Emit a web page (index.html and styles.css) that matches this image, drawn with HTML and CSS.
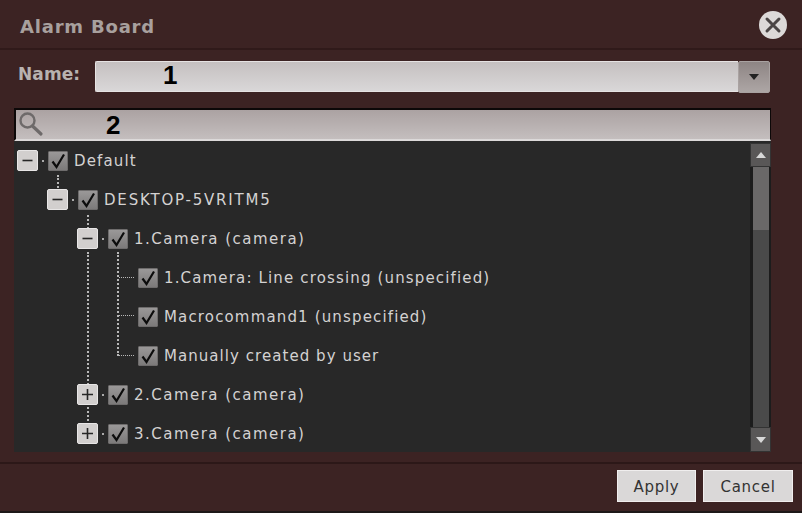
FILE: index.html
```html
<!DOCTYPE html>
<html lang="en">
<head>
<meta charset="utf-8">
<title>Alarm Board</title>
<link rel="stylesheet" href="styles.css">
</head>
<body>
<div class="dialog">
  <header class="titlebar">
    <h1 class="title">Alarm Board</h1>
    <button class="close" aria-label="Close">
      <svg width="30" height="30" viewBox="0 0 30 30"><circle cx="15" cy="15" r="14" fill="#dcd9d8"/><path d="M9 9 21 21M21 9 9 21" stroke="#4a4545" stroke-width="3" stroke-linecap="round"/></svg>
    </button>
  </header>
  <div class="name-row">
    <label class="name-label">Name:</label>
    <div class="combo">
      <div class="combo-input"><span class="mark mark-1">1</span></div>
      <div class="combo-btn"><svg width="10" height="6" viewBox="0 0 10 6"><path d="M0 0H10L5 6Z" fill="#222"/></svg></div>
    </div>
  </div>
  <div class="search">
    <svg class="search-icon" width="28" height="28" viewBox="0 0 28 28"><circle cx="11.5" cy="10.5" r="7" fill="none" stroke="#6e6a6a" stroke-width="2.4"/><path d="M16.5 16 25 24" stroke="#6e6a6a" stroke-width="3.2" stroke-linecap="round"/></svg>
    <span class="mark mark-2">2</span>
  </div>
  <div class="tree">
    <div class="rows">
      <i class="line v v1"></i><i class="line v v2"></i><i class="line v v3"></i><i class="line v v4"></i>
      <i class="line h h1"></i><i class="line h h2"></i><i class="line h h3"></i>
      <div class="row d0"><span class="exp"><svg width="13" height="13" viewBox="0 0 13 13"><path d="M1.5 6.5H11.5" class="sign"/></svg></span><i class="dot"></i><span class="chk"><svg width="18" height="18" viewBox="0 0 18 18"><path d="M3.5 9.5 7.5 15 15 2.5" class="tick"/></svg></span><span class="lbl">Default</span></div>
      <div class="row d1"><span class="exp"><svg width="13" height="13" viewBox="0 0 13 13"><path d="M1.5 6.5H11.5" class="sign"/></svg></span><i class="dot"></i><span class="chk"><svg width="18" height="18" viewBox="0 0 18 18"><path d="M3.5 9.5 7.5 15 15 2.5" class="tick"/></svg></span><span class="lbl lbl-host">DESKTOP-5VRITM5</span></div>
      <div class="row d2"><span class="exp"><svg width="13" height="13" viewBox="0 0 13 13"><path d="M1.5 6.5H11.5" class="sign"/></svg></span><i class="dot"></i><span class="chk"><svg width="18" height="18" viewBox="0 0 18 18"><path d="M3.5 9.5 7.5 15 15 2.5" class="tick"/></svg></span><span class="lbl lbl-cam">1.Camera (camera)</span></div>
      <div class="row d3"><span class="chk"><svg width="18" height="18" viewBox="0 0 18 18"><path d="M3.5 9.5 7.5 15 15 2.5" class="tick"/></svg></span><span class="lbl">1.Camera: Line crossing (unspecified)</span></div>
      <div class="row d3"><span class="chk"><svg width="18" height="18" viewBox="0 0 18 18"><path d="M3.5 9.5 7.5 15 15 2.5" class="tick"/></svg></span><span class="lbl">Macrocommand1 (unspecified)</span></div>
      <div class="row d3"><span class="chk"><svg width="18" height="18" viewBox="0 0 18 18"><path d="M3.5 9.5 7.5 15 15 2.5" class="tick"/></svg></span><span class="lbl lbl-user">Manually created by user</span></div>
      <div class="row d2"><span class="exp"><svg width="13" height="13" viewBox="0 0 13 13"><path d="M1 6.5H12M6.5 1V12" class="sign"/></svg></span><i class="dot"></i><span class="chk"><svg width="18" height="18" viewBox="0 0 18 18"><path d="M3.5 9.5 7.5 15 15 2.5" class="tick"/></svg></span><span class="lbl lbl-cam">2.Camera (camera)</span></div>
      <div class="row d2"><span class="exp"><svg width="13" height="13" viewBox="0 0 13 13"><path d="M1 6.5H12M6.5 1V12" class="sign"/></svg></span><i class="dot"></i><span class="chk"><svg width="18" height="18" viewBox="0 0 18 18"><path d="M3.5 9.5 7.5 15 15 2.5" class="tick"/></svg></span><span class="lbl lbl-cam">3.Camera (camera)</span></div>
    </div>
    <div class="scrollbar">
      <div class="sb-btn"><svg width="10" height="6" viewBox="0 0 10 6"><path d="M0 6H10L5 0Z" fill="#d8d8d8"/></svg></div>
      <div class="sb-track"><div class="sb-thumb"></div></div>
      <div class="sb-btn"><svg width="10" height="6" viewBox="0 0 10 6"><path d="M0 0H10L5 6Z" fill="#d8d8d8"/></svg></div>
    </div>
  </div>
  <footer class="footer">
    <button class="btn btn-apply">Apply</button>
    <button class="btn btn-cancel">Cancel</button>
  </footer>
</div>
</body>
</html>
```
FILE: styles.css
```css
* { box-sizing: border-box; }
html, body { margin: 0; height: 100%; background: #3c2323; overflow: hidden; }
body { font-family: "DejaVu Sans", sans-serif; }
.dialog { width: 802px; height: 513px; display: flex; flex-direction: column; border-bottom: 2px solid #1e1818; }
.titlebar { height: 50px; flex: none; display: flex; align-items: center; justify-content: space-between; padding: 5px 14px 0 20px; border-bottom: 2px solid #301a1a; }
.title { margin: 0; font-size: 18px; font-weight: bold; color: #a8a09e; letter-spacing: .8px; }
.close { width: 30px; height: 30px; padding: 0; border: 0; background: none; display: block; margin-top: -3px; }
.close svg { display: block; }
.name-row { flex: none; height: 32px; margin-top: 11px; display: flex; padding-left: 18px; }
.name-label { width: 77px; font-size: 17px; font-weight: bold; color: #b8b2b0; line-height: 27px; letter-spacing: .1px; }
.combo { width: 675px; display: flex; }
.combo-input { flex: 1; height: 31px; background: linear-gradient(#c5c0c0, #d9d7d8); border: 1px solid #e6e3e3; border-right: 0; border-radius: 2px 0 0 2px; position: relative; }
.combo-btn { width: 32px; height: 32px; display: flex; align-items: center; justify-content: center; background: linear-gradient(#8e8584, #ada6a5); border-radius: 2px; border: 1px solid #a9a2a1; }
.mark { position: absolute; font-family: "Liberation Sans", sans-serif; font-weight: bold; font-size: 26px; color: #000; line-height: 1; }
.mark-1 { left: 67px; top: 0; }
.mark-2 { left: 90px; top: 2px; }
.search { flex: none; height: 33px; margin: 15px 31px 0 14px; border: 2px solid #0c0808; border-right-width: 1px; background: linear-gradient(#aba2a2, #c4bebe); position: relative; border-bottom: 2px solid #dcd9d9; }
.search-icon { position: absolute; left: 0; top: 0; }
.tree { flex: none; height: 311px; margin: 0 31px 0 14px; background: #282828; display: flex; position: relative; }
.rows { flex: 1; position: relative; }
.row { height: 39px; display: flex; align-items: center; position: relative; }
.d0 { padding-left: 3px; }
.d1 { padding-left: 33px; }
.d2 { padding-left: 63px; }
.d3 { padding-left: 124px; }
.exp { width: 21px; height: 21px; flex: none; display: flex; align-items: center; justify-content: center; background: #d2cfce; border: 1px solid #e8e6e6; border-radius: 2px; }
.exp svg { display: block; }
.sign { fill: none; stroke: #262626; stroke-width: 1.6; }
.dot { width: 2px; height: 2px; margin: 0 4px; background: #aaa; flex: none; }
.chk { width: 20px; height: 20px; flex: none; display: flex; align-items: center; justify-content: center; background: linear-gradient(#9a9898, #7c7a7a); border: 1px solid #6e6c6c; border-radius: 1px; }
.tick { fill: none; stroke: #0c0c0c; stroke-width: 2.2; }
.lbl { margin-left: 6px; font-size: 15px; color: #d4d2d2; letter-spacing: 1.15px; white-space: nowrap; }
.lbl-host { letter-spacing: 1.8px; }
.lbl-cam { letter-spacing: 1.48px; }
.lbl-user { letter-spacing: 1.05px; }
.line { position: absolute; display: block; border: 0 dotted #b8b8b8; }
.v { border-left-width: 2px; width: 0; }
.h { border-top-width: 1px; height: 0; left: 105px; width: 15px; }
.v1 { left: 43px; top: 34px; height: 16px; }
.v2 { left: 73px; top: 74px; height: 14px; }
.v3 { left: 73px; top: 111px; height: 173px; }
.v4 { left: 103px; top: 111px; height: 104px; }
.h1 { top: 136px; }
.h2 { top: 174px; }
.h3 { top: 214px; }
.scrollbar { width: 21px; flex: none; display: flex; flex-direction: column; padding-top: 2px; }
.sb-btn { height: 24px; flex: none; display: flex; align-items: center; justify-content: center; background: #595757; border: 1px solid #333; }
.sb-track { flex: 1; margin: 0; border-left: 3px solid #1c1c1c; border-right: 2px solid #1c1c1c; background: #4a4a4a; }
.sb-thumb { height: 63px; background: #6a6868; }
.sb-btn:last-child { height: 25px; }
.footer { flex: 1; margin-top: 10px; border-top: 2px solid #2c1818; display: flex; justify-content: flex-end; gap: 7px; padding: 6px 9px 0 0; }
.btn { height: 32px; padding: 2px 0 0; border: 1px solid #f0eeee; background: #dad8d8; color: #333; font: 15px "DejaVu Sans", sans-serif; letter-spacing: .7px; }
.btn-apply { width: 79px; }
.btn-cancel { width: 90px; }
```
